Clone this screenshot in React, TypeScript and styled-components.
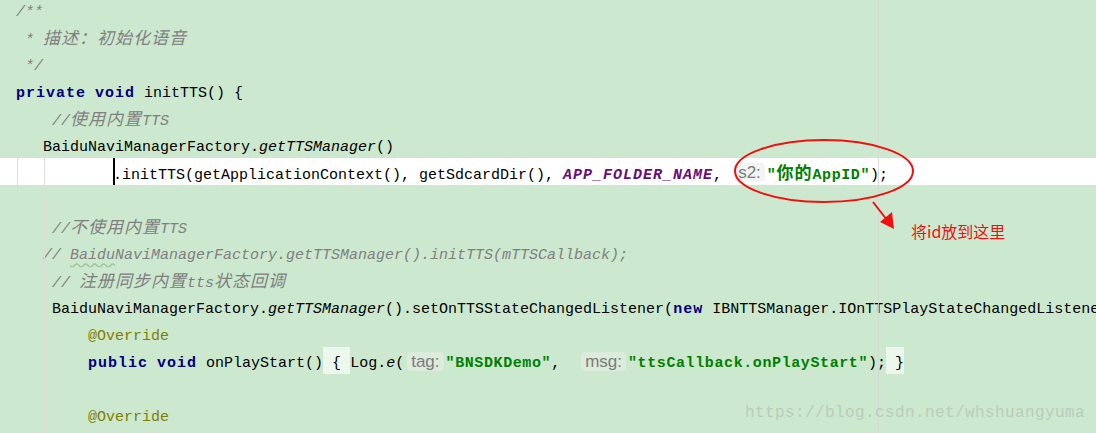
import styled, { createGlobalStyle } from 'styled-components'

const Global = createGlobalStyle`
  html, body {
    margin: 0;
    padding: 0;
    background: #cce8cf;
    overflow: hidden;
  }
`

const Editor = styled.div`
  position: relative;
  width: 1096px;
  height: 433px;
  overflow: hidden;
  background: #cce8cf;
  font-family: 'Liberation Mono', 'Noto Sans CJK SC', monospace;
  font-size: 15px;
  color: #000;
`

const Lines = styled.div`
  margin-top: -4px;
`

const Line = styled.div<{ $indent: number; $current?: boolean }>`
  box-sizing: border-box;
  height: 27px;
  padding-top: 6px;
  padding-left: ${({ $indent }) => $indent}px;
  line-height: 21px;
  white-space: pre;
  background: ${({ $current }) => ($current ? '#ffffff' : 'transparent')};
`

const Kw = styled.span`
  color: #000080;
  font-weight: bold;
  letter-spacing: 1px;
`

const Cm = styled.span`
  color: #808080;
  font-style: italic;
`

const Str = styled.span`
  color: #008000;
  font-weight: bold;
  letter-spacing: 0.6px;
`

const Const = styled.span`
  color: #660e7a;
  font-weight: bold;
  font-style: italic;
  letter-spacing: 1px;
`

const Ann = styled.span`
  color: #808000;
`

const It = styled.span`
  font-style: italic;
`

const Cjk = styled.span`
  font-size: 17px;
  letter-spacing: 1px;
`

const Typo = styled.span`
  text-decoration: underline wavy #9cc79c;
  text-underline-offset: 3px;
`

const Hint = styled.span`
  display: inline-block;
  vertical-align: top;
  margin: -1px 2px 0 3px;
  padding: 0 4px;
  height: 19px;
  line-height: 19px;
  border-radius: 4px;
  background: rgba(232, 236, 232, 0.55);
  font-family: 'Liberation Sans', 'Noto Sans', sans-serif;
  font-size: 17px;
  font-weight: normal;
  font-style: normal;
  color: #7b7b7b;
  letter-spacing: 0;
`

const Fold = styled.span`
  display: inline-block;
  vertical-align: top;
  box-sizing: border-box;
  margin-top: -6px;
  padding-top: 6px;
  height: 27px;
  line-height: 21px;
  background: #ecf7ed;
`

const Caret = styled.span`
  display: inline-block;
  vertical-align: top;
  margin-top: -6px;
  margin-right: -2px;
  width: 2px;
  height: 27px;
  background: #000;
`

const Guide = styled.div<{ $x: number; $top: number }>`
  position: absolute;
  left: ${({ $x }) => $x}px;
  top: ${({ $top }) => $top}px;
  bottom: 0;
  width: 1px;
  background: #d9ded9;
`

const MarginLine = styled.div`
  position: absolute;
  left: 878px;
  top: 0;
  bottom: 0;
  width: 1px;
  background: rgba(215, 215, 215, 0.85);
`

const Annotation = styled.svg`
  position: absolute;
  left: 0;
  top: 0;
  pointer-events: none;
`

const Note = styled.div`
  position: absolute;
  left: 911px;
  top: 221px;
  font-family: 'Noto Sans CJK SC', 'Liberation Sans', sans-serif;
  font-size: 16px;
  line-height: 20px;
  color: #f01010;
`

const Watermark = styled.div`
  position: absolute;
  left: 745px;
  top: 403px;
  font-family: 'Liberation Mono', monospace;
  font-size: 16px;
  letter-spacing: 0.4px;
  line-height: 20px;
  color: #b9cdbb;
`

export default function App() {
  return (
    <>
      <Global />
      <Editor>
        <Lines>
          <Line $indent={16}>
            <Cm>/**</Cm>
          </Line>
          <Line $indent={16}>
            <Cm>
              {' * '}
              <Cjk>描述：初始化语音</Cjk>
            </Cm>
          </Line>
          <Line $indent={16}>
            <Cm> */</Cm>
          </Line>
          <Line $indent={16}>
            <Kw>private</Kw> <Kw>void</Kw> initTTS() {'{'}
          </Line>
          <Line $indent={52}>
            <Cm>
              //<Cjk>使用内置</Cjk>TTS
            </Cm>
          </Line>
          <Line $indent={43}>
            BaiduNaviManagerFactory.<It>getTTSManager</It>()
          </Line>
          <Line $indent={113} $current>
            <Caret />
            .initTTS(getApplicationContext(), getSdcardDir(), <Const>APP_FOLDER_NAME</Const>,{' '}
            <Hint>s2:</Hint>
            <Str>
              "<Cjk>你的</Cjk>AppID"
            </Str>
            );
          </Line>
          <Line $indent={16} />
          <Line $indent={52}>
            <Cm>
              //<Cjk>不使用内置</Cjk>TTS
            </Cm>
          </Line>
          <Line $indent={43}>
            <Cm>
              // <Typo>Baidu</Typo>NaviManagerFactory.getTTSManager().initTTS(mTTSCallback);
            </Cm>
          </Line>
          <Line $indent={52}>
            <Cm>
              // <Cjk>注册同步内置</Cjk>tts<Cjk>状态回调</Cjk>
            </Cm>
          </Line>
          <Line $indent={52}>
            BaiduNaviManagerFactory.<It>getTTSManager</It>().setOnTTSStateChangedListener(<Kw>new</Kw>{' '}
            IBNTTSManager.IOnTTSPlayStateChangedListener() {'{'}
          </Line>
          <Line $indent={88}>
            <Ann>@Override</Ann>
          </Line>
          <Line $indent={88}>
            <Kw>public</Kw> <Kw>void</Kw> onPlayStart()<Fold> {'{'} </Fold>Log.<It>e</It>(
            <Hint>tag:</Hint>
            <Str>"BNSDKDemo"</Str>
            {',  '}
            <Hint>msg:</Hint>
            <Str>"ttsCallback.onPlayStart"</Str>);<Fold> {'}'}</Fold>
          </Line>
          <Line $indent={88} />
          <Line $indent={88}>
            <Ann>@Override</Ann>
          </Line>
        </Lines>

        <Guide $x={17} $top={104} />
        <Guide $x={44} $top={158} />
        <Guide $x={53} $top={322} />
        <MarginLine />

        <Annotation width={1096} height={433} viewBox="0 0 1096 433">
          <ellipse cx="824" cy="171" rx="89" ry="31" fill="none" stroke="#f01010" strokeWidth="2" />
          <line x1="873" y1="202" x2="887" y2="220" stroke="#f01010" strokeWidth="2" />
          <polygon points="880,222 892,212 894,229" fill="#f01010" />
        </Annotation>
        <Note>将id放到这里</Note>
        <Watermark>https://blog.csdn.net/whshuangyuma</Watermark>
      </Editor>
    </>
  )
}
